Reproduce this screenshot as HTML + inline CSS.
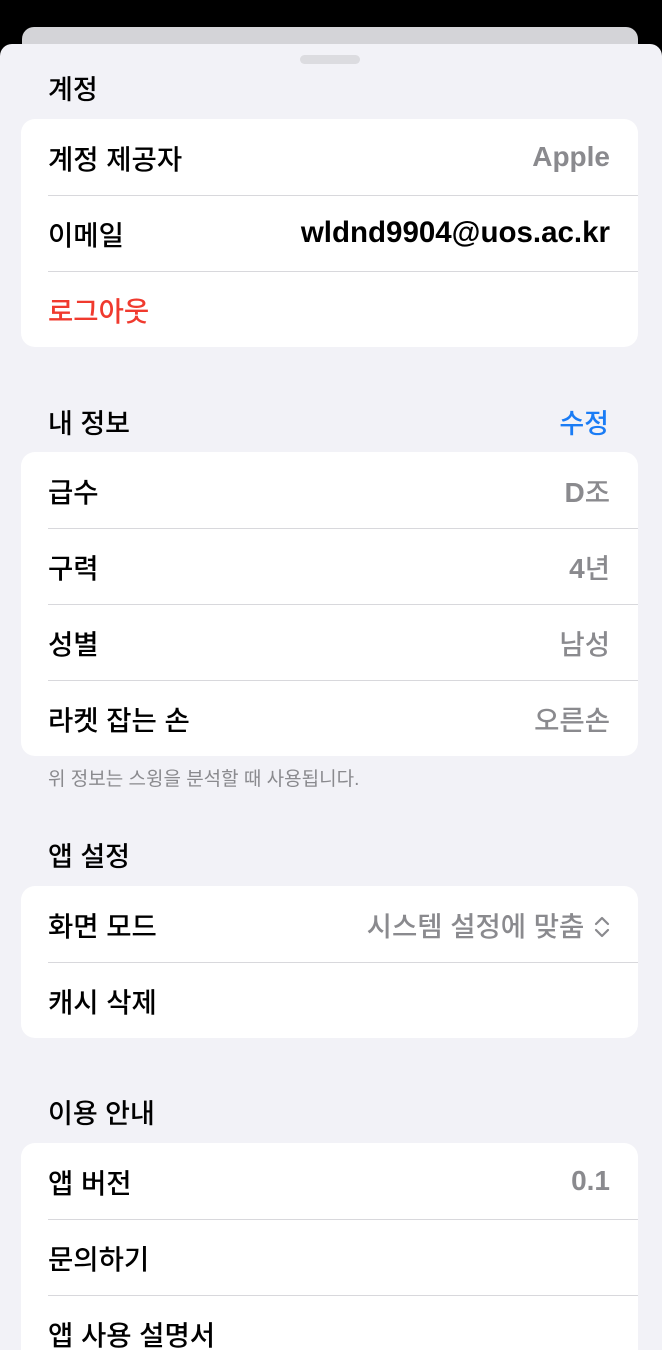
<!DOCTYPE html>
<html style="height:1350px;overflow:hidden"><head><meta charset="utf-8"><style>
*{margin:0;padding:0;box-sizing:border-box}
body{width:662px;height:1350px;background:#000;position:relative;overflow:hidden;font-family:"Liberation Sans","Noto Sans CJK KR",sans-serif;color:#000;font-weight:500}
.back{position:absolute;left:22px;top:27px;width:616px;height:60px;background:#d4d4d8;border-radius:12px}
.sheet{position:absolute;left:0;top:44px;width:662px;height:1306px;background:#f2f2f7;border-radius:12px 12px 0 0;overflow:hidden}
.handle{position:absolute;left:300px;top:11px;width:60px;height:9px;border-radius:5px;background:#dcdce0}
.h{position:absolute;left:48px;font-size:27px;line-height:32px}
.edit{position:absolute;right:53px;font-size:27px;line-height:32px;color:#1a7cf5}
.card{position:absolute;left:21px;width:617px;background:#fff;border-radius:14px;overflow:hidden}
.row{height:76px;position:relative;display:flex;align-items:center;padding-left:27px;padding-right:28px;font-size:27.5px}
.row+.row::before{content:"";position:absolute;left:27px;right:0;top:0;border-top:1px solid #d8d8dc}
.v{margin-left:auto;color:#8a8a8e}
.l{font-size:28px;font-weight:bold}
.note{position:absolute;left:48px;font-size:19px;color:#8a8a8e;font-weight:400}
</style></head><body>
<div class="back"></div>
<div class="sheet">
<div class="handle"></div>
<div class="h" style="top:30px">계정</div>
<div class="card" style="top:75px">
<div class="row">계정 제공자<span class="v l">Apple</span></div>
<div class="row">이메일<span class="v l" style="color:#000;font-size:29.5px">wldnd9904@uos.ac.kr</span></div>
<div class="row" style="color:#f03a2e">로그아웃</div>
</div>
<div class="h" style="top:364px">내 정보</div>
<div class="edit" style="top:364px">수정</div>
<div class="card" style="top:408px">
<div class="row">급수<span class="v"><span class="l">D</span>조</span></div>
<div class="row">구력<span class="v"><span class="l">4</span>년</span></div>
<div class="row">성별<span class="v">남성</span></div>
<div class="row">라켓 잡는 손<span class="v">오른손</span></div>
</div>
<div class="note" style="top:720px">위 정보는 스윙을 분석할 때 사용됩니다.</div>
<div class="h" style="top:797px">앱 설정</div>
<div class="card" style="top:842px">
<div class="row">화면 모드<span class="v">시스템 설정에 맞춤 <svg width="16" height="22" viewBox="0 0 16 22" style="vertical-align:-2px;margin-left:2px"><path d="M2 8l6-6 6 6M2 14l6 6 6-6" fill="none" stroke="#8a8a8e" stroke-width="2.2" stroke-linecap="round" stroke-linejoin="round"/></svg></span></div>
<div class="row">캐시 삭제</div>
</div>
<div class="h" style="top:1054px">이용 안내</div>
<div class="card" style="top:1099px;height:260px">
<div class="row">앱 버전<span class="v l">0.1</span></div>
<div class="row">문의하기</div>
<div class="row">앱 사용 설명서</div>
</div>
</div>
</body></html>
